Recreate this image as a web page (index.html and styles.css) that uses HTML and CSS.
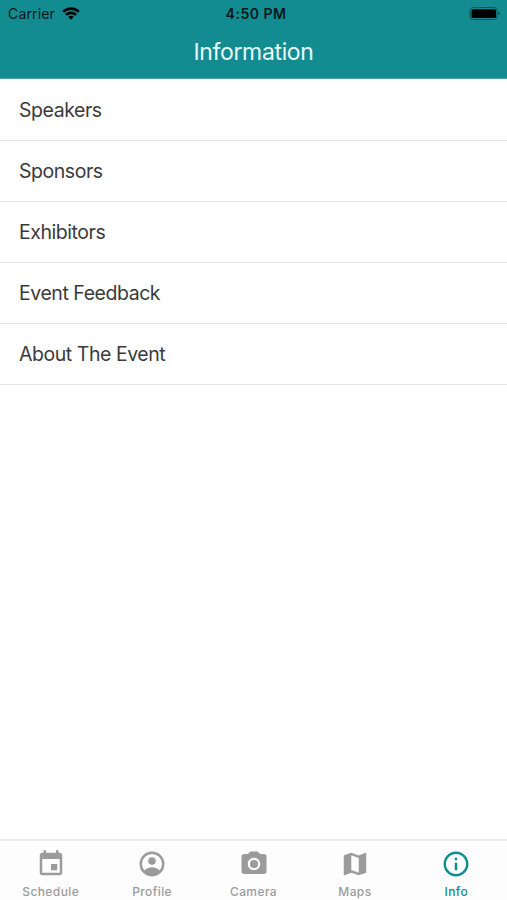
FILE: index.html
```html
<!DOCTYPE html>
<html lang="en">
<head>
  <meta charset="UTF-8" />
  <meta name="viewport" content="width=device-width, initial-scale=1.0" />
  <title>Information</title>
  <link rel="stylesheet" href="styles.css">
</head>
<body>
  <header class="header">
    <div class="status-bar">
      <div class="carrier">
        <span>Carrier</span>
        <svg class="wifi" viewBox="0 0 18 13">
          <path d="M1.2 4.8a11.2 11.2 0 0 1 15.6 0" />
          <path d="M4 7.9a7.2 7.2 0 0 1 10 0" />
          <path class="dot" d="M9 12.8 6.2 10a4 4 0 0 1 5.6 0z" />
        </svg>
      </div>
      <div class="time">4:50 PM</div>
      <div class="battery">
        <svg viewBox="0 0 32 14" width="32" height="14">
          <rect class="case" x="1" y="0.500" width="27" height="12" rx="3" />
          <rect x="2.500" y="2.200" width="24.500" height="8.800" rx="1.500" />
          <path class="cap" d="M29.300 4.700q1.700.5 1.700 1.800t-1.700 1.800z" />
        </svg>
      </div>
    </div>
    <h1 class="title">Information</h1>
  </header>

  <ul class="list">
    <li>Speakers</li>
    <li>Sponsors</li>
    <li>Exhibitors</li>
    <li>Event Feedback</li>
    <li>About The Event</li>
  </ul>

  <nav class="tabs">
    <a class="tab">
      <svg viewBox="0 0 24 24"><path d="M17 12h-5v5h5v-5zM16 1v2H8V1H6v2H5c-1.110 0-1.990.9-1.990 2L3 19c0 1.100.89 2 2 2h14c1.100 0 2-.9 2-2V5c0-1.100-.9-2-2-2h-1V1h-2zm3 18H5V8h14v11z" /></svg>
      <span>Schedule</span>
    </a>
    <a class="tab">
      <svg viewBox="0 0 24 24"><path fill-rule="evenodd" d="M12 2a10 10 0 1 0 0 20 10 10 0 0 0 0-20zM5.900 17.150a8 8 0 1 1 12.200 0C16.700 15.600 14 14.600 12 14.600s-4.700 1-6.100 2.550z" /><circle cx="12" cy="9.500" r="3" /></svg>
      <span>Profile</span>
    </a>
    <a class="tab">
      <svg viewBox="0 0 24 24"><circle cx="12" cy="12" r="3.200" /><path d="M9 2L7.170 4H4c-1.100 0-2 .9-2 2v12c0 1.100.9 2 2 2h16c1.100 0 2-.9 2-2V6c0-1.100-.9-2-2-2h-3.170L15 2H9zm3 15c-2.760 0-5-2.240-5-5s2.240-5 5-5 5 2.240 5 5-2.240 5-5 5z" /></svg>
      <span>Camera</span>
    </a>
    <a class="tab">
      <svg viewBox="0 0 24 24"><path d="M20.500 3l-.16.030L15 5.100 9 3 3.360 4.900c-.21.070-.36.250-.36.480V20.500c0 .28.220.5.500.5l.16-.030L9 18.900l6 2.100 5.640-1.900c.21-.070.360-.250.360-.480V3.500c0-.28-.22-.5-.5-.5zM15 19l-6-2.110V5l6 2.110V19z" /></svg>
      <span>Maps</span>
    </a>
    <a class="tab active">
      <svg viewBox="0 0 24 24"><path d="M11 17h2v-6h-2v6zm1-15C6.480 2 2 6.480 2 12s4.480 10 10 10 10-4.480 10-10S17.520 2 12 2zm0 18c-4.410 0-8-3.590-8-8s3.590-8 8-8 8 3.590 8 8-3.590 8-8 8zM11 9h2V7h-2v2z" /></svg>
      <span>Info</span>
    </a>
  </nav>
</body>
</html>
```
FILE: styles.css
```css
* {
  box-sizing: border-box;
}
body {
  margin: 0;
  height: 100vh;
  display: flex;
  flex-direction: column;
  overflow: hidden;
  background: #fff;
  color: #3a3a3c;
  font-family: Inter, Roboto, sans-serif;
}
.header {
  height: 79px;
  background: #128c90;
  border-bottom: 1px solid #4ca8ab;
}
.status-bar {
  display: grid;
  grid-template-columns: 1fr auto 1fr;
  align-items: center;
  height: 27px;
  padding: 0 6px 0 8px;
  color: #06191a;
  font-size: 14px;
}
.carrier {
  display: flex;
  align-items: center;
  gap: 7px;
  letter-spacing: 0.15px;
}
.wifi {
  width: 18px;
  height: 13px;
  fill: none;
  stroke: #000;
  stroke-width: 2.6;
}
.wifi .dot {
  fill: #000;
  stroke: none;
}
.time {
  padding-left: 3px;
  font-weight: 600;
  letter-spacing: 0.5px;
}
.battery {
  display: flex;
  justify-content: flex-end;
}
.battery .case {
  fill: none;
  stroke: #0a5255;
}
.battery .cap {
  fill: #0a5255;
}
.title {
  margin: 0;
  color: #e8fafa;
  font-size: 23px;
  font-weight: 400;
  letter-spacing: -0.35px;
  line-height: 50px;
  text-align: center;
}
.list {
  flex: 1;
  margin: 0;
  padding: 1px 0 0;
  list-style: none;
}
.list li {
  height: 61px;
  padding-left: 19px;
  border-bottom: 1px solid #e6e6e6;
  font-size: 19.5px;
  letter-spacing: -0.45px;
  line-height: 61px;
}
.tabs {
  display: flex;
  height: 61px;
  background: #fdfdfd;
  border-top: 2px solid #ececec;
}
.tab {
  flex: 1;
  display: flex;
  flex-direction: column;
  align-items: center;
  padding-top: 7.5px;
  color: #9b9b9b;
  font-size: 12px;
  font-weight: 500;
  letter-spacing: 0.4px;
  line-height: 16px;
}
.tab svg {
  width: 30px;
  height: 30px;
  margin-bottom: 5.5px;
  fill: currentColor;
}
.tab.active {
  color: #128c90;
}
```
